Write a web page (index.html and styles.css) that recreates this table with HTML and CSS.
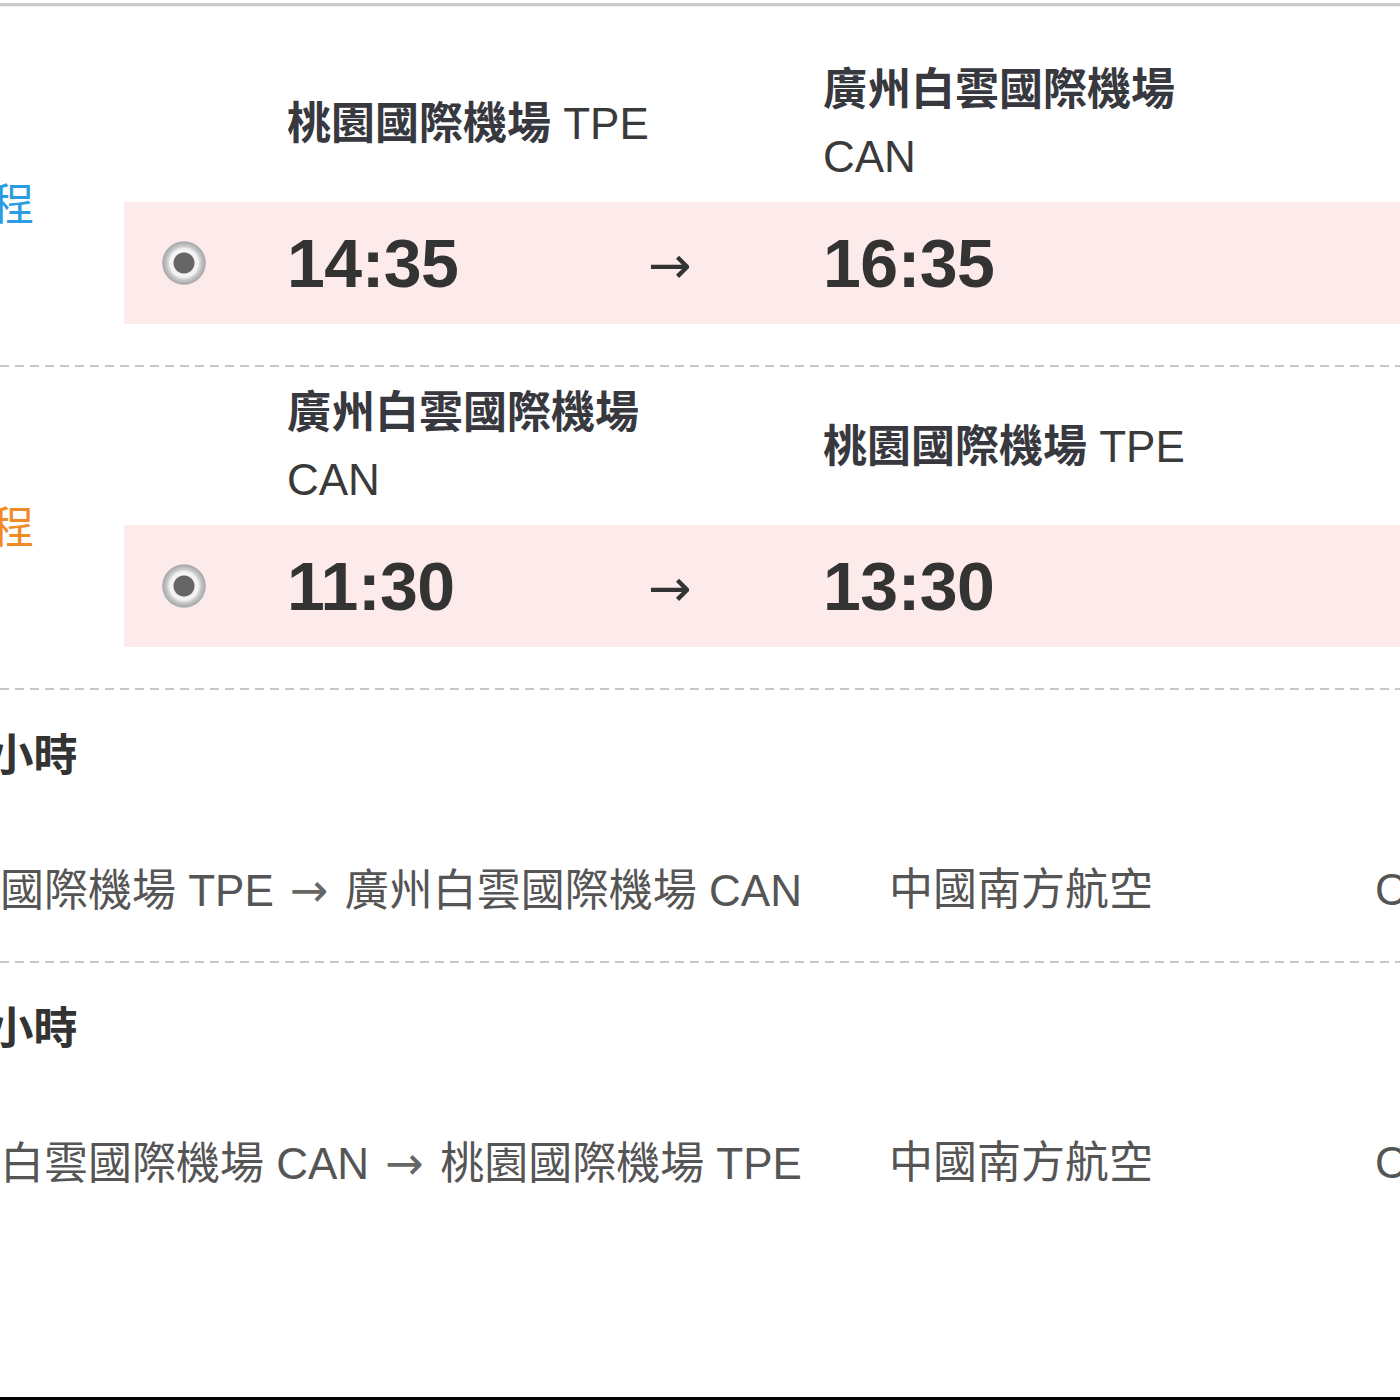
FILE: index.html
```html
<!DOCTYPE html>
<html lang="zh-Hant">
<head>
<meta charset="utf-8">
<title>航班資訊</title>
<link rel="stylesheet" href="styles.css">
</head>
<body>
<div class="page">
  <div class="top-rule"></div>

  <section class="leg leg-first">
    <div class="leg-label label-go">去程</div>
    <div class="leg-body">
      <div class="leg-head">
        <div class="cell-spacer"></div>
        <div class="airport dep">桃園國際機場 <span class="code">TPE</span></div>
        <div class="airport arr">廣州白雲國際機場<br><span class="code">CAN</span></div>
      </div>
      <div class="time-row">
        <div class="radio-cell"><span class="radio"></span></div>
        <div class="time">14:35</div>
        <div class="arrow">→</div>
        <div class="time">16:35</div>
      </div>
    </div>
  </section>

  <div class="dash"></div>

  <section class="leg">
    <div class="leg-label label-back">回程</div>
    <div class="leg-body">
      <div class="leg-head">
        <div class="cell-spacer"></div>
        <div class="airport dep">廣州白雲國際機場<br><span class="code">CAN</span></div>
        <div class="airport arr">桃園國際機場 <span class="code">TPE</span></div>
      </div>
      <div class="time-row">
        <div class="radio-cell"><span class="radio"></span></div>
        <div class="time">11:30</div>
        <div class="arrow">→</div>
        <div class="time">13:30</div>
      </div>
    </div>
  </section>

  <div class="dash"></div>

  <div class="detail">
    <div class="duration">2小時</div>
    <div class="route-line">
      <div class="route">桃園國際機場 TPE <span class="route-arrow">→</span> 廣州白雲國際機場 CAN</div>
      <div class="airline">中國南方航空</div>
      <div class="flight">CZ3098</div>
    </div>
  </div>

  <div class="dash"></div>

  <div class="detail">
    <div class="duration">2小時</div>
    <div class="route-line">
      <div class="route">廣州白雲國際機場 CAN <span class="route-arrow">→</span> 桃園國際機場 TPE</div>
      <div class="airline">中國南方航空</div>
      <div class="flight">CZ3097</div>
    </div>
  </div>

  <div class="bottom-rule"></div>
</div>
</body>
</html>
```

FILE: styles.css
```css
html, body {
  margin: 0;
  padding: 0;
  background: #ffffff;
}

body {
  width: 1400px;
  height: 1400px;
  overflow: hidden;
  font-family: "Liberation Sans", "Noto Sans CJK TC", sans-serif;
  color: #333;
}

.page {
  display: flex;
  flex-direction: column;
  height: 1400px;
  width: 1400px;
  overflow: hidden;
}

.top-rule {
  margin-top: 3px;
  height: 3px;
  background: #c9c9c9;
  box-shadow: 0 1px 1px rgba(0, 0, 0, 0.06);
  flex: none;
}

.bottom-rule {
  margin-top: auto;
  height: 3px;
  background: #000;
  flex: none;
}

.leg {
  display: flex;
  align-items: center;
  flex: none;
}

.leg-first {
  padding-top: 38px;
}

.leg-body {
  flex: 1;
  padding-bottom: 41px;
}

.leg-label {
  width: 124px;
  flex: none;
  font-size: 44px;
  line-height: 44px;
  margin-left: -54px;
  padding-right: 54px;
  box-sizing: content-box;
  white-space: nowrap;
  align-self: center;
}

.label-go {
  color: #2b9be4;
}

.label-back {
  color: #f28b25;
}

.leg-head {
  height: 158px;
  display: grid;
  grid-template-columns: 163px 536px 1fr;
  align-items: center;
}

.airport {
  font-size: 44px;
  line-height: 67px;
  font-weight: 700;
  color: #38383f;
  white-space: nowrap;
}

.airport .code {
  font-weight: 400;
  color: #3a3a3a;
}

.time-row {
  height: 122px;
  background: #fdeaea;
  display: grid;
  grid-template-columns: 163px 361px 175px 1fr;
  align-items: center;
}

.radio-cell {
  display: flex;
  justify-content: center;
  padding-right: 43px;
}

.radio {
  width: 44px;
  height: 44px;
  border-radius: 50%;
  box-sizing: border-box;
  background: radial-gradient(circle at center, #666 0, #666 10px, #f4f4f4 11px, #f4f4f4 14px, #c9c9c9 17px, #a9a9a9 21px, #cfcfcf 22px);
}

.time {
  font-size: 68px;
  line-height: 80px;
  font-weight: 700;
  color: #333;
  letter-spacing: -0.5px;
}

.arrow {
  font-family: "DejaVu Sans", sans-serif;
  font-size: 52px;
  line-height: 60px;
  color: #333;
  padding-top: 4px;
}

.route-arrow {
  font-family: "DejaVu Sans", sans-serif;
  font-size: 46px;
  margin: 0 4px;
  color: #666;
}

.dash {
  height: 2px;
  flex: none;
  background: repeating-linear-gradient(to right, #c8c8c8 0, #c8c8c8 9px, transparent 9px, transparent 15px);
}

.detail {
  padding: 44px 0 49px;
  flex: none;
}

.duration {
  font-size: 44px;
  line-height: 44px;
  font-weight: 700;
  color: #333;
  margin-left: -35px;
  white-space: nowrap;
}

.route-line {
  margin-top: 90px;
  display: flex;
  font-size: 44px;
  line-height: 44px;
  height: 44px;
  color: #555;
  white-space: nowrap;
  margin-left: -88px;
}

.route {
  width: 977px;
  flex: none;
}

.airline {
  width: 486px;
  flex: none;
}

.flight {
  flex: none;
}
```
